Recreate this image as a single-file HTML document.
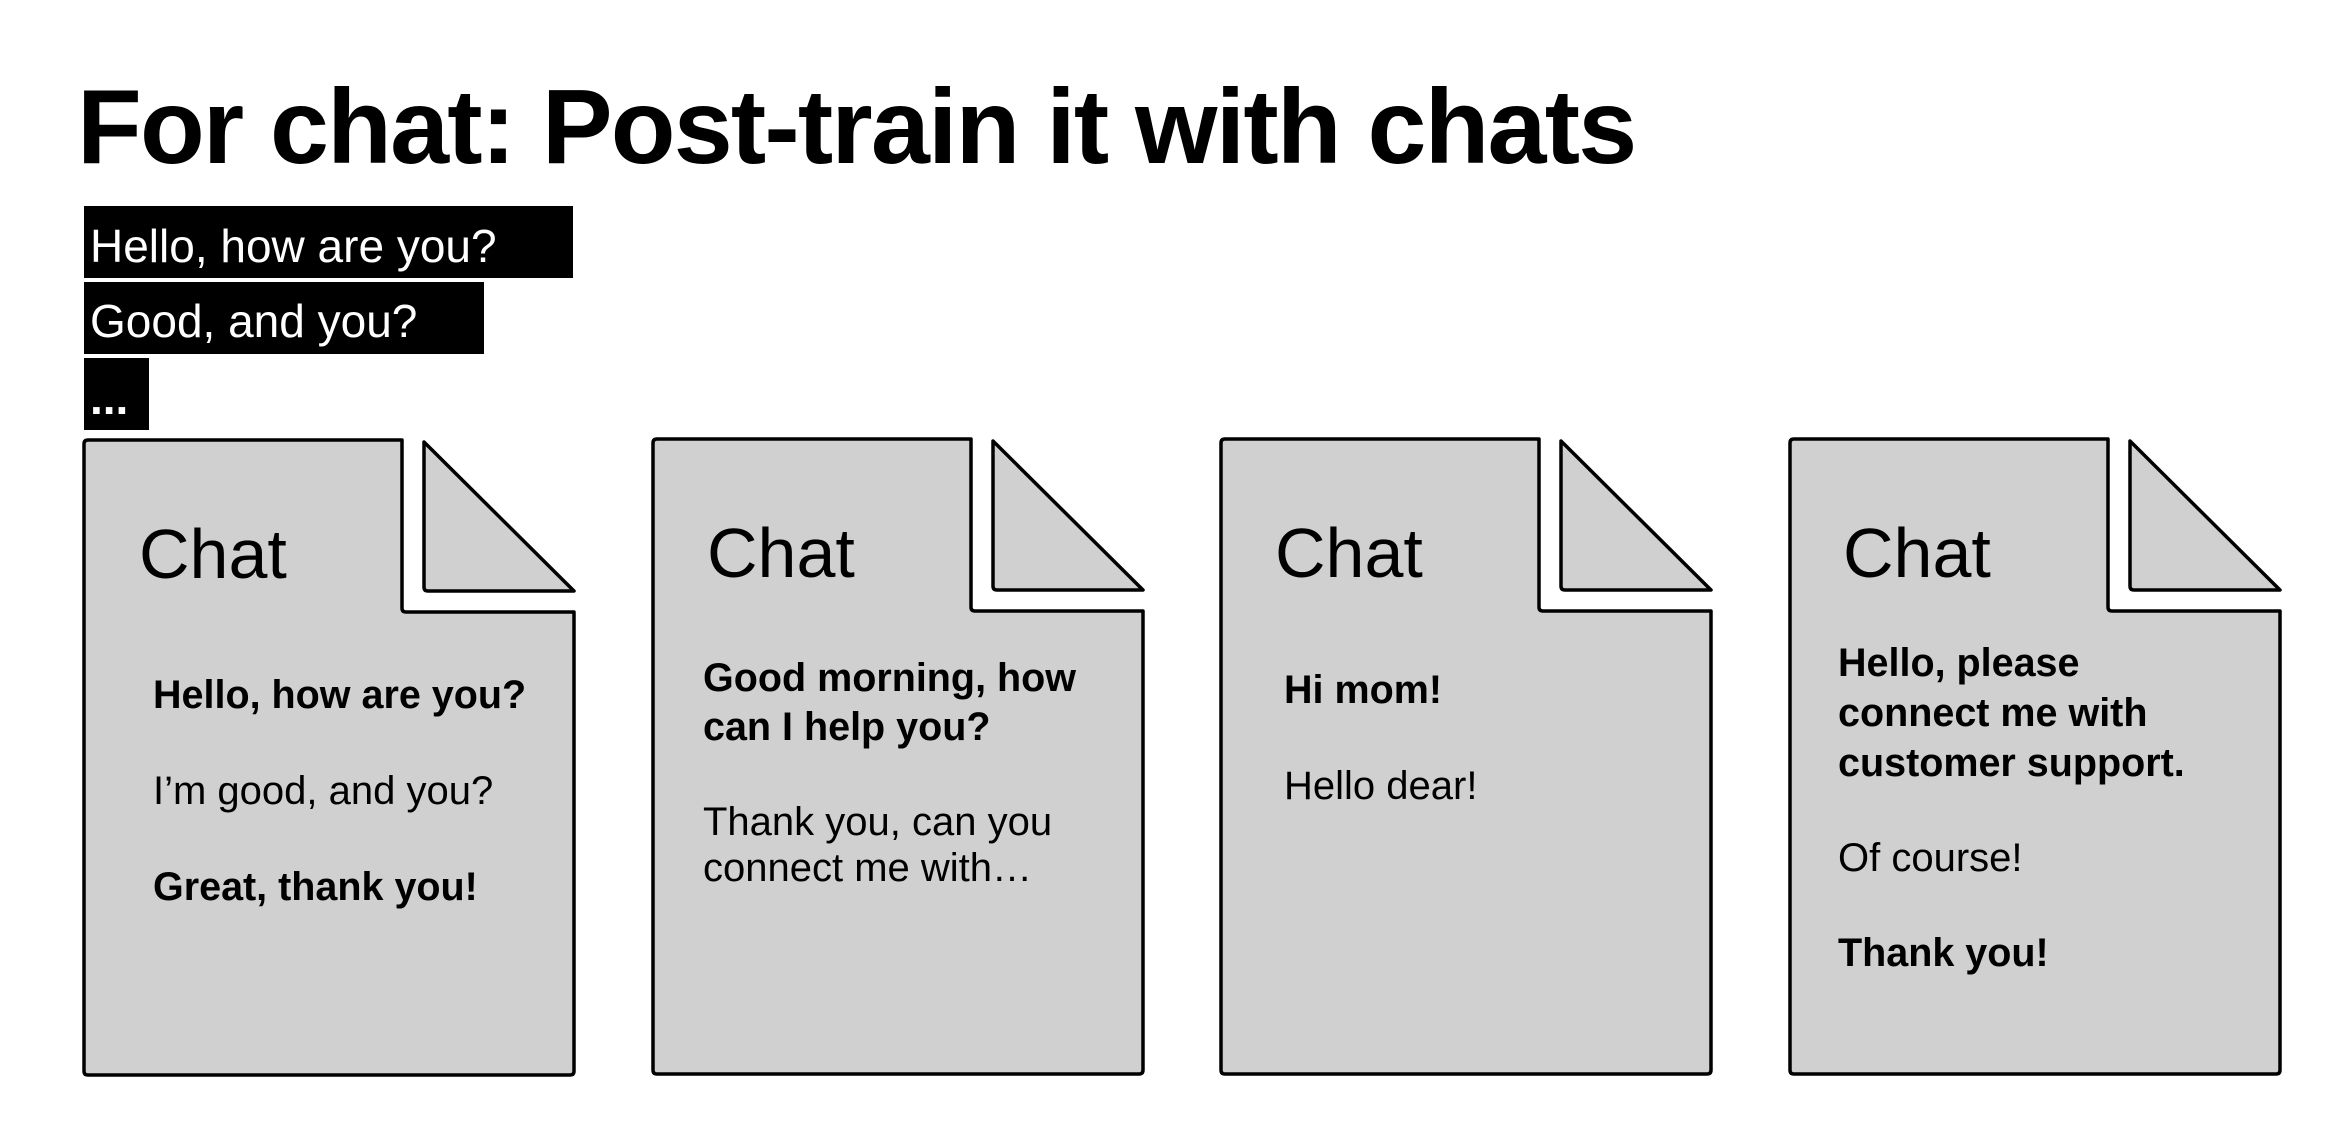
<!DOCTYPE html>
<html><head><meta charset="utf-8"><style>
html,body{margin:0;padding:0;background:#fff;}
body{width:2336px;height:1148px;position:relative;overflow:hidden;font-family:"Liberation Sans",Arial,sans-serif;color:#000;}
.t{position:absolute;white-space:nowrap;line-height:1;}
.box{position:absolute;background:#000;}
.w{color:#fff;font-size:46px;}
.chat{font-size:70px;}
.b{font-size:39.5px;font-weight:bold;}
.r{font-size:40px;}
</style></head><body>
<svg width="2336" height="1148" style="position:absolute;left:0;top:0">
<g fill="#d0d0d0" stroke="#000" stroke-width="3.5" stroke-linejoin="round">
<path d="M84,444 Q84,440 88,440 H402 V608 Q402,612 406,612 H574 V1071 Q574,1075 570,1075 H88 Q84,1075 84,1071 Z"/>
<path d="M424,442 L574,591 H428 Q424,591 424,587 Z"/>
<path d="M653,443 Q653,439 657,439 H971 V607 Q971,611 975,611 H1143 V1070 Q1143,1074 1139,1074 H657 Q653,1074 653,1070 Z"/>
<path d="M993,441 L1143,590 H997 Q993,590 993,586 Z"/>
<path d="M1221,443 Q1221,439 1225,439 H1539 V607 Q1539,611 1543,611 H1711 V1070 Q1711,1074 1707,1074 H1225 Q1221,1074 1221,1070 Z"/>
<path d="M1561,441 L1711,590 H1565 Q1561,590 1561,586 Z"/>
<path d="M1790,443 Q1790,439 1794,439 H2108 V607 Q2108,611 2112,611 H2280 V1070 Q2280,1074 2276,1074 H1794 Q1790,1074 1790,1070 Z"/>
<path d="M2130,441 L2280,590 H2134 Q2130,590 2130,586 Z"/>
</g></svg>

<div class="t" style="left:77px;top:74px;font-size:106px;font-weight:bold;letter-spacing:-1.8px">For chat: Post-train it with chats</div>

<div class="box" style="left:84px;top:206px;width:489px;height:72px"></div>
<div class="box" style="left:84px;top:282px;width:400px;height:72px"></div>
<div class="box" style="left:84px;top:358px;width:65px;height:72px"></div>
<div class="t w" style="left:90px;top:223px">Hello, how are you?</div>
<div class="t w" style="left:90px;top:298px">Good, and you?</div>
<div class="t w" style="left:90px;top:375px;font-weight:bold">...</div>

<div class="t chat" style="left:139px;top:519px">Chat</div>
<div class="t chat" style="left:707px;top:518px">Chat</div>
<div class="t chat" style="left:1275px;top:518px">Chat</div>
<div class="t chat" style="left:1843px;top:518px">Chat</div>

<div class="t b" style="left:153px;top:676px">Hello, how are you?</div>
<div class="t r" style="left:153px;top:771px">I’m good, and you?</div>
<div class="t b" style="left:153px;top:868px">Great, thank you!</div>

<div class="t b" style="left:703px;top:659px">Good morning, how</div>
<div class="t b" style="left:703px;top:708px">can I help you?</div>
<div class="t r" style="left:703px;top:802px">Thank you, can you</div>
<div class="t r" style="left:703px;top:848px">connect me with…</div>

<div class="t b" style="left:1284px;top:671px">Hi mom!</div>
<div class="t r" style="left:1284px;top:766px">Hello dear!</div>

<div class="t b" style="left:1838px;top:644px">Hello, please</div>
<div class="t b" style="left:1838px;top:694px">connect me with</div>
<div class="t b" style="left:1838px;top:744px">customer support.</div>
<div class="t r" style="left:1838px;top:838px">Of course!</div>
<div class="t b" style="left:1838px;top:934px">Thank you!</div>
</body></html>
